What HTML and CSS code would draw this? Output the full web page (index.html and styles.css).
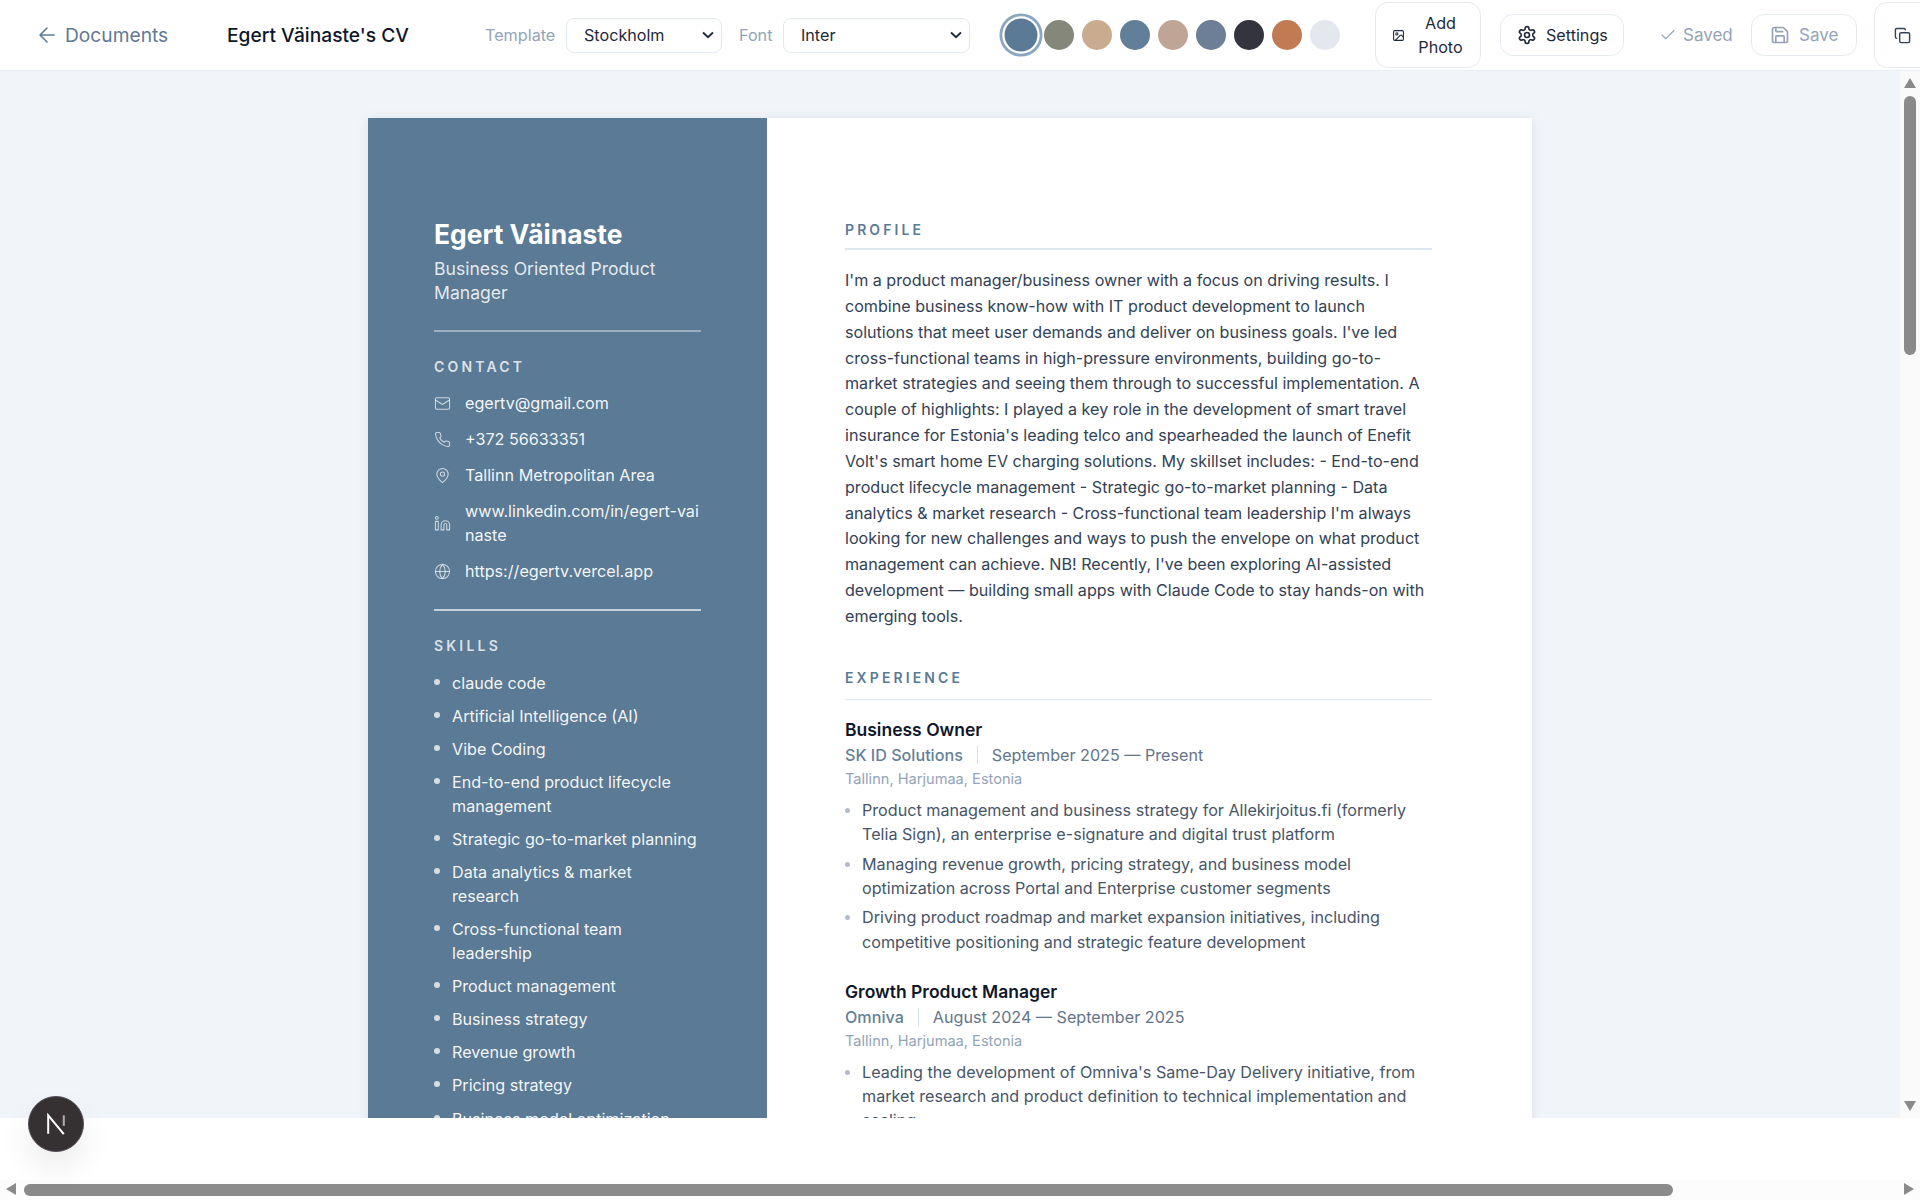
FILE: index.html
```html
<!DOCTYPE html>
<html lang="en">
<head>
<meta charset="utf-8">
<title>Egert Väinaste's CV</title>
<link rel="stylesheet" href="styles.css">
</head>
<body>
<div class="app">
  <header class="toolbar">
    <a class="back">
      <svg class="ico-back" viewBox="0 0 24 24"><path d="M19 12H5M12 19l-7-7 7-7"/></svg>
      <span>Documents</span>
    </a>
    <div class="doc-title">Egert Väinaste's CV</div>
    <label class="field-label label-template">Template</label>
    <select class="select select-template"><option>Stockholm</option></select>
    <label class="field-label label-font">Font</label>
    <select class="select select-font"><option>Inter</option></select>
    <div class="swatches">
      <span class="swatch selected c1"></span>
      <span class="swatch c2"></span>
      <span class="swatch c3"></span>
      <span class="swatch c4"></span>
      <span class="swatch c5"></span>
      <span class="swatch c6"></span>
      <span class="swatch c7"></span>
      <span class="swatch c8"></span>
      <span class="swatch c9"></span>
    </div>
    <button class="btn btn-photo">
      <svg class="ico-small" viewBox="0 0 24 24"><rect x="3" y="3" width="18" height="18" rx="2"/><circle cx="9" cy="9" r="2"/><path d="m21 15-3.1-3.1a2 2 0 0 0-2.8 0L6 21"/></svg>
      <span>Add Photo</span>
    </button>
    <button class="btn btn-settings">
      <svg class="ico-18" viewBox="0 0 24 24"><path d="M12.22 2h-.44a2 2 0 0 0-2 2v.18a2 2 0 0 1-1 1.73l-.43.25a2 2 0 0 1-2 0l-.15-.08a2 2 0 0 0-2.73.73l-.22.38a2 2 0 0 0 .73 2.73l.15.1a2 2 0 0 1 1 1.72v.51a2 2 0 0 1-1 1.74l-.15.09a2 2 0 0 0-.73 2.73l.22.38a2 2 0 0 0 2.73.73l.15-.08a2 2 0 0 1 2 0l.43.25a2 2 0 0 1 1 1.73V20a2 2 0 0 0 2 2h.44a2 2 0 0 0 2-2v-.18a2 2 0 0 1 1-1.73l.43-.25a2 2 0 0 1 2 0l.15.08a2 2 0 0 0 2.73-.73l.22-.39a2 2 0 0 0-.73-2.73l-.15-.08a2 2 0 0 1-1-1.74v-.5a2 2 0 0 1 1-1.74l.15-.09a2 2 0 0 0 .73-2.73l-.22-.38a2 2 0 0 0-2.73-.73l-.15.08a2 2 0 0 1-2 0l-.43-.25a2 2 0 0 1-1-1.73V4a2 2 0 0 0-2-2z"/><circle cx="12" cy="12" r="3"/></svg>
      <span>Settings</span>
    </button>
    <div class="saved">
      <svg class="ico-check" viewBox="0 0 24 24"><path d="M20 6 9 17l-5-5"/></svg>
      <span>Saved</span>
    </div>
    <button class="btn btn-save">
      <svg class="ico-18" viewBox="0 0 24 24"><path d="M15.2 3a2 2 0 0 1 1.4.6l3.8 3.8a2 2 0 0 1 .6 1.4V19a2 2 0 0 1-2 2H5a2 2 0 0 1-2-2V5a2 2 0 0 1 2-2z"/><path d="M17 21v-7a1 1 0 0 0-1-1H8a1 1 0 0 0-1 1v7"/><path d="M7 3v4a1 1 0 0 0 1 1h7"/></svg>
      <span>Save</span>
    </button>
    <button class="btn btn-copy">
      <svg class="ico-copy" viewBox="0 0 24 24"><rect x="8" y="8" width="14" height="14" rx="2"/><path d="M4 16c-1.1 0-2-.9-2-2V4c0-1.1.9-2 2-2h10c1.1 0 2 .9 2 2"/></svg>
    </button>
  </header>

  <main class="stage">
    <article class="cv">
      <aside class="side">
        <h1 class="name">Egert Väinaste</h1>
        <p class="role">Business Oriented Product Manager</p>
        <hr class="side-rule">
        <h2 class="side-heading">CONTACT</h2>
        <ul class="contacts">
          <li><svg viewBox="0 0 24 24"><rect x="2" y="4" width="20" height="16" rx="2"/><path d="m22 7-8.97 5.7a1.94 1.94 0 0 1-2.06 0L2 7"/></svg><span>egertv@gmail.com</span></li>
          <li><svg viewBox="0 0 24 24"><path d="M22 16.92v3a2 2 0 0 1-2.18 2 19.79 19.79 0 0 1-8.63-3.07 19.5 19.5 0 0 1-6-6 19.79 19.79 0 0 1-3.07-8.67A2 2 0 0 1 4.11 2h3a2 2 0 0 1 2 1.72c.13.96.36 1.9.7 2.81a2 2 0 0 1-.45 2.11L8.09 9.91a16 16 0 0 0 6 6l1.27-1.27a2 2 0 0 1 2.11-.45c.91.34 1.85.57 2.81.7A2 2 0 0 1 22 16.92z"/></svg><span>+372 56633351</span></li>
          <li><svg viewBox="0 0 24 24"><path d="M20 10c0 6-8 12-8 12s-8-6-8-12a8 8 0 0 1 16 0z"/><circle cx="12" cy="10" r="3"/></svg><span>Tallinn Metropolitan Area</span></li>
          <li><svg viewBox="0 0 24 24"><path d="M16 8a6 6 0 0 1 6 6v7h-4v-7a2 2 0 0 0-4 0v7h-4v-7a6 6 0 0 1 6-6z"/><rect x="2" y="9" width="4" height="12"/><circle cx="4" cy="4" r="2"/></svg><span class="break">www.linkedin.com/in/egert-vainaste</span></li>
          <li><svg viewBox="0 0 24 24"><circle cx="12" cy="12" r="10"/><path d="M12 2a14.5 14.5 0 0 0 0 20 14.5 14.5 0 0 0 0-20"/><path d="M2 12h20"/></svg><span>https://egertv.vercel.app</span></li>
        </ul>
        <hr class="side-rule rule-strong">
        <h2 class="side-heading">SKILLS</h2>
        <ul class="skills">
          <li>claude code</li>
          <li>Artificial Intelligence (AI)</li>
          <li>Vibe Coding</li>
          <li>End-to-end product lifecycle management</li>
          <li>Strategic go-to-market planning</li>
          <li>Data analytics &amp; market research</li>
          <li>Cross-functional team leadership</li>
          <li>Product management</li>
          <li>Business strategy</li>
          <li>Revenue growth</li>
          <li>Pricing strategy</li>
          <li>Business model optimization</li>
        </ul>
      </aside>
      <section class="body">
        <h2 class="heading">PROFILE</h2>
        <p class="profile">I'm a product manager/business owner with a focus on driving results. I combine business know-how with IT product development to launch solutions that meet user demands and deliver on business goals. I've led cross-functional teams in high-pressure environments, building go-to-market strategies and seeing them through to successful implementation. A couple of highlights: I played a key role in the development of smart travel insurance for Estonia's leading telco and spearheaded the launch of Enefit Volt's smart home EV charging solutions. My skillset includes: - End-to-end product lifecycle management - Strategic go-to-market planning - Data analytics &amp; market research - Cross-functional team leadership I'm always looking for new challenges and ways to push the envelope on what product management can achieve. NB! Recently, I've been exploring AI-assisted development — building small apps with Claude Code to stay hands-on with emerging tools.</p>
        <h2 class="heading heading-exp">EXPERIENCE</h2>
        <div class="job">
          <h3 class="job-title">Business Owner</h3>
          <div class="job-meta"><span class="company">SK ID Solutions</span><span class="dates">September 2025 — Present</span></div>
          <div class="job-place">Tallinn, Harjumaa, Estonia</div>
          <ul class="bullets">
            <li>Product management and business strategy for Allekirjoitus.fi (formerly Telia Sign), an enterprise e-signature and digital trust platform</li>
            <li>Managing revenue growth, pricing strategy, and business model optimization across Portal and Enterprise customer segments</li>
            <li>Driving product roadmap and market expansion initiatives, including competitive positioning and strategic feature development</li>
          </ul>
        </div>
        <div class="job">
          <h3 class="job-title">Growth Product Manager</h3>
          <div class="job-meta"><span class="company">Omniva</span><span class="dates">August 2024 — September 2025</span></div>
          <div class="job-place">Tallinn, Harjumaa, Estonia</div>
          <ul class="bullets">
            <li>Leading the development of Omniva's Same-Day Delivery initiative, from market research and product definition to technical implementation and scaling</li>
          </ul>
        </div>
      </section>
    </article>
  </main>
  <div class="foot"></div>

  <div class="vbar">
    <span class="arrow up"></span>
    <span class="vthumb"></span>
    <span class="arrow down"></span>
  </div>
  <div class="hbar">
    <span class="arrow left"></span>
    <span class="hthumb"></span>
    <span class="arrow right"></span>
  </div>
  <div class="next-badge">
    <svg viewBox="0 0 24 24"><path class="n-main" d="M3.5 22.5V2.5L20.5 23"/><path class="n-side" d="M20.5 2.5V14"/></svg>
  </div>
</div>
</body>
</html>
```
FILE: styles.css
```css
* { box-sizing: border-box; }
html, body { margin: 0; height: 100%; overflow: hidden; background: #fff; }
body { font-family: Inter, "Liberation Sans", sans-serif; color: #0f172a; }
svg { fill: none; stroke: currentColor; stroke-width: 2; stroke-linecap: round; stroke-linejoin: round; flex: none; }
h1, h2, h3, p, ul { margin: 0; padding: 0; }
ul { list-style: none; }

.app { position: relative; width: 1920px; height: 1200px; overflow: hidden; display: flex; flex-direction: column; }

/* toolbar */
.toolbar { flex: 0 0 71px; display: flex; align-items: center; width: 1960px; padding-left: 35px; background: #fff; border-bottom: 1px solid #e8edf3; }
.toolbar > * { flex: none; }
.back { display: flex; align-items: center; gap: 6px; color: #5f7a94; font-size: 19.2px; width: 133px; white-space: nowrap; }
.ico-back { width: 24px; height: 24px; stroke-width: 1.6; }
.doc-title { font-size: 19.2px; font-weight: 500; width: 207px; margin-left: 59px; color: #0f172a; white-space: nowrap; }
.field-label { font-size: 16.2px; color: #94a3b8; white-space: nowrap; }
.label-template { margin-left: 51px; width: 71px; }
.select {
  height: 35px; border: 1px solid #e2e8f0; border-radius: 8px; color: #1e293b; font: 16.15px Inter, sans-serif; padding: 0 28px 0 17px;
  appearance: none; -webkit-appearance: none;
  background: #fff url("data:image/svg+xml,%3Csvg xmlns='http://www.w3.org/2000/svg' width='14' height='8' viewBox='0 0 14 8'%3E%3Cpath d='M2 1.5 7 6.2l5-4.7' fill='none' stroke='%231e293b' stroke-width='1.9'/%3E%3C/svg%3E") no-repeat right 6px center;
}
.select-template { width: 156px; margin-left: 10px; }
.label-font { margin-left: 17px; width: 35px; }
.select-font { width: 187px; margin-left: 9px; }
.swatches { display: flex; gap: 8px; margin-left: 36px; }
.swatch { width: 30px; height: 30px; border-radius: 50%; }
.swatch.selected { transform: scale(1.1); box-shadow: 0 0 0 2px #fff, 0 0 0 4.6px #8ba6bf; }
.c1 { background: #5b7a95; } .c2 { background: #84877a; } .c3 { background: #c9ab90; }
.c4 { background: #617f99; } .c5 { background: #bfa596; } .c6 { background: #6c7f96; }
.c7 { background: #34343f; } .c8 { background: #c27a52; } .c9 { background: #e4e8ee; }
.btn { display: flex; align-items: center; gap: 8px; font: 16.15px Inter, sans-serif; color: #1e293b; background: #fff; border: 1px solid #e5eaf1; border-radius: 13px; padding: 0 16px; height: 42px; }
.btn-photo { width: 106px; height: 66px; margin-left: 35px; padding: 0 14px 0 16px; gap: 10px; line-height: 24px; text-align: center; }
.ico-small { width: 13px; height: 13px; }
.ico-18 { width: 20px; height: 20px; }
.ico-copy { width: 17px; height: 17px; color: #334155; }
.btn-settings { margin-left: 19px; width: 124px; padding: 0 16px 0 16px; gap: 9px; }
.saved { display: flex; align-items: center; gap: 6px; margin-left: 35px; width: 73px; color: #94a3b8; font-size: 17px; }
.ico-check { width: 18px; height: 18px; stroke-width: 1.5; }
.btn-save { margin-left: 19px; width: 106px; padding: 0 16px 0 18px; gap: 9px; color: #94a3b8; font-size: 17px; }
.btn-copy { margin-left: 17px; width: 60px; height: 66px; padding-left: 19px; }

/* stage */
.stage { flex: 0 0 1047px; overflow: hidden; background: #f1f5f9; padding: 47px 20px 0 0; display: flex; justify-content: center; }
.foot { flex: 1; background: #fff; }
.cv { width: 1164px; height: 1640px; flex: none; display: flex; background: #fff; box-shadow: 0 1px 12px rgba(15, 23, 42, .08); }

/* sidebar */
.side { width: 399px; flex: none; background: #5b7a95; color: #fff; padding: 97px 66px 0; }
.name { font-size: 26.4px; line-height: 38px; font-weight: 700; }
.role { font-size: 17.6px; line-height: 23.5px; color: rgba(255,255,255,.85); margin-top: 4px; }
.side-rule { border: 0; height: 2px; background: rgba(255,255,255,.4); margin: 26px 0 0; }
.rule-strong { margin-top: 26px; background: rgba(255,255,255,.65); }
.side-heading { font-size: 14px; line-height: 20px; font-weight: 600; letter-spacing: 3.2px; color: rgba(255,255,255,.8); margin-top: 25px; }
.contacts { margin-top: 14px; display: flex; flex-direction: column; gap: 12px; }
.contacts li { display: flex; align-items: center; gap: 14px; font-size: 16.15px; line-height: 24px; color: rgba(255,255,255,.95); }
.contacts svg { width: 17px; height: 17px; stroke-width: 1.5; color: rgba(255,255,255,.7); }
.break { word-break: break-all; }
.skills { margin-top: 15px; display: flex; flex-direction: column; gap: 9.05px; }
.skills li { position: relative; padding-left: 18px; font-size: 16.15px; line-height: 24px; color: rgba(255,255,255,.95); }
.skills li::before { content: ""; position: absolute; left: 0; top: 8px; width: 6px; height: 6px; border-radius: 50%; background: rgba(255,255,255,.75); }

/* body */
.body { flex: 1; padding: 102px 100px 0 78px; }
.heading { font-size: 14px; line-height: 20px; font-weight: 600; letter-spacing: 3.1px; color: #5b7a95; border-bottom: 2px solid #dde5ee; padding-bottom: 8px; }
.heading-exp { margin-top: 38px; border-bottom-width: 1px; padding-bottom: 11px; }
.profile { font-size: 16.12px; line-height: 25.84px; color: #334155; margin-top: 18px; }
.job { margin-top: 28px; }
.heading-exp + .job { margin-top: 18px; }
.job + .job { margin-top: 26px; }
.job-title { font-size: 17.5px; line-height: 24px; font-weight: 600; color: #0f172a; }
.job-meta { display: flex; align-items: center; font-size: 16.15px; line-height: 24px; color: #64748b; margin-top: 1px; }
.company { color: #667f97; padding-right: 14px; border-right: 1px solid #d5dfe9; line-height: 18px; font-weight: 500; }
.dates { padding-left: 14px; }
.job-place { font-size: 14.6px; line-height: 22px; color: #94a3b8; margin-top: 1px; }
.bullets { margin-top: 8px; display: flex; flex-direction: column; gap: 5.4px; }
.bullets li { position: relative; padding-left: 17px; font-size: 16.15px; line-height: 24.2px; color: #475569; }
.bullets li::before { content: ""; position: absolute; left: 0; top: 10px; width: 5px; height: 5px; border-radius: 50%; background: #b0bccb; }

/* scrollbars */
.vbar { position: absolute; left: 1900px; top: 71px; width: 20px; height: 1047px; background: #fafafa; }
.vthumb { position: absolute; left: 4px; top: 25px; width: 12px; height: 259px; border-radius: 6px; background: #8a8a8a; }
.hbar { position: absolute; left: 0; top: 1180px; width: 1920px; height: 20px; background: #fcfcfc; }
.hthumb { position: absolute; left: 24px; top: 4px; width: 1649px; height: 12px; border-radius: 6px; background: #8a8a8a; }
.arrow { position: absolute; width: 0; height: 0; border: solid transparent; }
.up { left: 3.5px; top: 7px; border-width: 0 6.5px 10px; border-bottom-color: #8a8a8a; }
.down { left: 3.5px; top: 1030px; border-width: 10px 6.5px 0; border-top-color: #8a8a8a; }
.left { left: 6px; top: 3px; border-width: 6.5px 10px 6.5px 0; border-right-color: #8a8a8a; }
.right { left: 1904px; top: 3px; border-width: 6.5px 0 6.5px 10px; border-left-color: #8a8a8a; }

/* dev badge */
.next-badge { position: absolute; left: 28px; top: 1096px; width: 56px; height: 56px; border-radius: 50%; background: #353133; border: 1px solid #55505a; box-shadow: 0 16px 32px rgba(0,0,0,.08); display: flex; align-items: center; justify-content: center; color: #fff; }
.next-badge svg { width: 22px; height: 22px; stroke-width: 2.2; stroke-linecap: butt; stroke-linejoin: miter; }
.n-side { opacity: .6; }
```
